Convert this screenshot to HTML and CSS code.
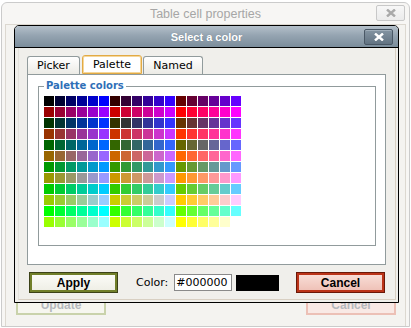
FILE: index.html
```html
<!DOCTYPE html>
<html>
<head>
  <meta charset="utf-8">
  <title>Select a color</title>
  <link rel="stylesheet" href="styles.css">
</head>
<body>
  <div class="window">
    <div class="window-title">
      Table cell properties
      <span class="window-close">
        <svg width="10" height="8" viewBox="0 0 10 8"><path d="M1 0.5 L9 7.5 M9 0.5 L1 7.5" stroke="#a9a9a9" stroke-width="2.4"/></svg>
      </span>
    </div>
    <div class="window-frame">
      <div class="window-buttons">
        <button class="btn btn-update faded">Update</button>
        <button class="btn btn-cancel faded">Cancel</button>
      </div>
    </div>
  </div>

  <div class="dialog">
    <div class="dialog-title">
      Select a color
      <span class="dialog-close">
        <svg width="10" height="8" viewBox="0 0 10 8"><path d="M1 0.5 L9 7.5 M9 0.5 L1 7.5" stroke="#fff" stroke-width="2.4"/></svg>
      </span>
    </div>
    <div class="dialog-body">
      <div class="dialog-frame">
        <div class="tabs">
          <span class="tab tab-picker">Picker</span>
          <span class="tab tab-palette current">Palette</span>
          <span class="tab tab-named">Named</span>
        </div>
        <div class="panel">
          <fieldset class="palette-box">
            <legend>Palette colors</legend>
            <div id="palette" class="palette"></div>
          </fieldset>
        </div>
        <div class="actions">
          <button class="btn btn-apply">Apply</button>
          <label class="color-label">Color:</label>
          <input type="text" id="colorValue" class="color-input" value="#000000">
          <span id="preview" class="color-preview"></span>
          <button class="btn btn-cancel">Cancel</button>
        </div>
      </div>
    </div>
  </div>

  <script>
    const palette = document.getElementById("palette");
    const steps = ["00", "33", "66", "99", "cc", "ff"];

    for (const g of steps) {
      for (const r of steps) {
        for (const b of steps) {
          const cell = document.createElement("span");
          cell.className = "swatch";
          cell.style.backgroundColor = "#" + r + g + b;
          palette.appendChild(cell);
        }
      }
    }
  </script>
</body>
</html>
```

FILE: styles.css
```css
* { margin: 0; padding: 0; box-sizing: border-box; }
body {
  font-family: "DejaVu Sans", sans-serif;
  font-size: 11px;
  background: #fff;
  position: relative;
}

/* faded window behind */
.window {
  margin: 2px 0 0 1px;
  width: 409px;
  height: 325px;
  border: 1px solid #cbcbcb;
  border-radius: 6px 6px 0 0;
  background: #f7f6f4;
  display: flex;
  flex-direction: column;
}
.window-title {
  height: 21px;
  position: relative;
  display: flex;
  align-items: center;
  justify-content: center;
  font-family: "Liberation Sans", sans-serif;
  font-size: 12.5px;
  color: #a6a6a6;
}
.window-close {
  position: absolute;
  right: 4px;
  top: 2px;
  width: 29px;
  height: 16px;
  border: 1px solid #c8c8c8;
  border-radius: 2px;
  background: linear-gradient(#f7f7f7, #ebebeb);
  display: flex;
  align-items: center;
  justify-content: center;
}
.window-frame {
  flex: 1;
  margin: 0 3px 0 3px;
  border: 1px solid #dcd8d0;
  border-bottom: none;
  background: #f4f3f0;
  display: flex;
  flex-direction: column;
  justify-content: flex-end;
}
.window-buttons {
  display: flex;
  justify-content: space-between;
  padding: 0 9px 11px 10px;
}

/* buttons */
.btn {
  font-family: "Liberation Sans", sans-serif;
  font-weight: bold;
  font-size: 12px;
  color: #000;
  width: 87px;
  height: 19px;
  margin: 1px;
  border: 2px solid;
  cursor: pointer;
}
.btn-apply {
  border-color: #717f2a;
  box-shadow: 0 0 0 1px #3c4218;
  background: linear-gradient(#fbfbf7, #efefe6);
}
.btn-cancel {
  border-color: #bb3318;
  box-shadow: 0 0 0 1px #6a1808;
  background: linear-gradient(#f8ddd6, #efc2b8);
}
.btn.faded {
  color: #b4b8bd;
  box-shadow: none;
  height: 21px;
  margin: 0;
  width: 90px;
}
.btn-update.faded {
  border-color: #c9d2ab;
  background: #f6f6ef;
}
.btn-cancel.faded {
  border-color: #ecc0b6;
  background: #f9e9e5;
}

/* color dialog */
.dialog {
  position: absolute;
  left: 14px;
  top: 25px;
  width: 385px;
  height: 278px;
  border: 1px solid #000;
  border-radius: 5px 5px 0 0;
  display: flex;
  flex-direction: column;
  background: #f0efeb;
}
.dialog-title {
  height: 22px;
  border-bottom: 1px solid #000;
  border-radius: 4px 4px 0 0;
  background: linear-gradient(#b4c0ca 0%, #95a4b1 45%, #7b8d9b 100%);
  position: relative;
  display: flex;
  align-items: center;
  justify-content: center;
  font-family: "Liberation Sans", sans-serif;
  font-weight: bold;
  font-size: 11px;
  color: #fff;
  text-shadow: 0 0 1px #6a7a88;
}
.dialog-close {
  position: absolute;
  right: 5px;
  top: 3px;
  width: 29px;
  height: 16px;
  border: 1px solid #4a5866;
  border-radius: 2px;
  background: linear-gradient(#8494a2, #627382);
  box-shadow: inset 0 1px 0 #9fadb9;
  display: flex;
  align-items: center;
  justify-content: center;
}
.dialog-body {
  flex: 1;
  padding: 0 2px 2px 3px;
  display: flex;
}
.dialog-frame {
  flex: 1;
  border: 1px solid #d8cfc2;
  border-top: none;
  border-left-color: #e4e2dc;
}

.tabs {
  display: flex;
  align-items: flex-end;
  height: 19px;
  margin: 7px 0 0 8px;
}
.tab {
  height: 18px;
  border: 1px solid #919b9c;
  border-bottom: none;
  border-radius: 3px 3px 0 0;
  background: linear-gradient(#ffffff, #ecebe5);
  display: flex;
  align-items: center;
  justify-content: center;
  color: #000;
}
.tab-picker { width: 53px; }
.tab-palette { width: 60px; margin-left: 2px; }
.tab-named { width: 60px; margin-left: 1px; }
.tab.current {
  height: 19px;
  border: 1px solid #e2aa44;
  background: #fff;
  box-shadow: inset 0 0 0 1px #f6d79a;
}

.panel {
  height: 191px;
  margin: 0 9px 0 8px;
  border: 1px solid #919b9c;
  background: #fff;
  padding: 5px 9px 0 10px;
}
.palette-box {
  height: 166px;
  border: 1px solid #919b9c;
  padding: 4px 5px 0 5px;
}
.palette-box legend {
  margin-left: 0;
  padding: 0 2px;
  font-weight: bold;
  font-size: 10px;
  line-height: 12px;
  color: #2f6fb7;
}
.palette {
  display: grid;
  grid-template-columns: repeat(18, 10px);
  grid-auto-rows: 10px;
  gap: 1px;
}
.swatch { display: block; }

.actions {
  display: flex;
  align-items: center;
  height: 21px;
  margin-top: 7px;
  padding: 0 10px 0 10px;
}
.color-label {
  margin-left: 18px;
  color: #000;
}
.color-input {
  margin-left: 6px;
  width: 58px;
  height: 17px;
  border: 1px solid #8a8a8a;
  padding: 0 1px;
  font-family: "DejaVu Sans", sans-serif;
  font-size: 11px;
  color: #000;
  background: #fff;
}
.color-preview {
  margin-left: 4px;
  width: 43px;
  height: 16px;
  background: #000;
}
.actions .btn-cancel {
  margin-left: auto;
}
```
